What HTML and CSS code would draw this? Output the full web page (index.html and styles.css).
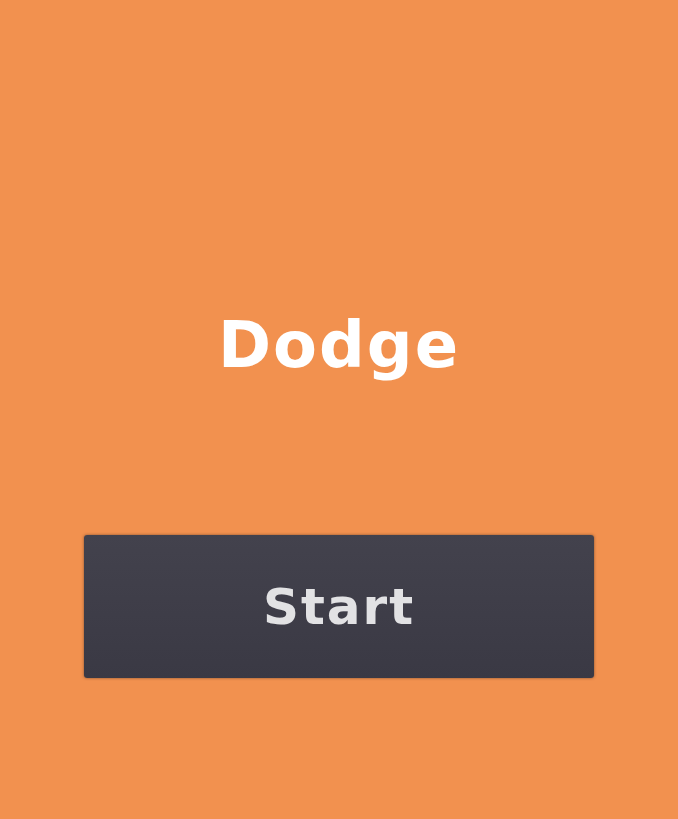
FILE: index.html
```html
<!DOCTYPE html>
<html lang="en">
<head>
    <meta charset="UTF-8" />
    <meta name="viewport" content="width=device-width, initial-scale=1" />
    <title>Dodge</title>
    <link rel="stylesheet" href="styles.css">
</head>
<body>
    <div class="menu">
        <h1 class="game-title">Dodge</h1>
        <button class="start-btn">Start</button>
    </div>
</body>
</html>
```

FILE: styles.css
```css
* {
    margin: 0; padding: 0; box-sizing: border-box;
    font-family: 'DejaVu Sans', 'Liberation Sans', sans-serif;
}
body {
    background: #f2914f;
    height: 100vh;
}
.menu {
    display: flex;
    flex-direction: column;
    align-items: center;
    padding-top: 305px;
}
.game-title {
    color: #ffffff;
    font-size: 64px;
    font-weight: bold;
    line-height: 80px;
    height: 80px;
    letter-spacing: 2px;
}
.start-btn {
    margin-top: 150px;
    width: 510px;
    height: 143px;
    background: linear-gradient(to bottom, #43424d, #3a3944);
    color: #e2e2e4;
    border: none;
    border-radius: 3px;
    box-shadow: 0 0 3px rgba(60, 40, 30, 0.6);
    font-size: 50px;
    font-weight: bold;
    letter-spacing: 2px;
    cursor: pointer;
}
```
